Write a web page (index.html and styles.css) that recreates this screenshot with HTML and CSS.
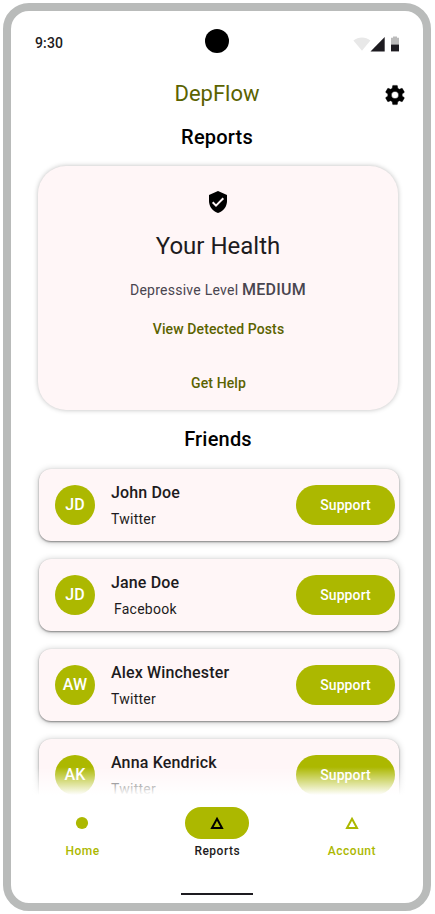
FILE: index.html
```html
<!DOCTYPE html>
<html lang="en">
<head>
<meta charset="utf-8">
<title>DepFlow</title>
<link rel="stylesheet" href="styles.css">
</head>
<body>
<div class="phone">
  <header class="status">
    <span class="time">9:30</span>
    <span class="camera"></span>
    <svg class="indicators" width="48" height="17" viewBox="0 0 48 17">
      <path d="M.4 4.600C5.500.4 12.500.4 17.400 4.600L9 14.700z" fill="#e8e8e8"/>
      <path d="M17.500 15.400 31.700.900V15.400z" fill="#1d1b20"/>
      <path d="M40 .500h4v1.300h2V8.500h-8V1.800h2z" fill="#bbb"/>
      <path d="M38 8.500h8v6.900h-8z" fill="#1d1b20"/>
    </svg>
  </header>
  <div class="appbar">
    <h1>DepFlow</h1>
    <svg class="gear" width="24" height="24" viewBox="0 0 24 24"><path d="M19.140 12.940c.04-.3.06-.61.06-.94 0-.32-.02-.64-.07-.94l2.030-1.580c.18-.14.23-.41.12-.61l-1.920-3.320c-.12-.22-.37-.29-.59-.22l-2.390.96c-.5-.38-1.030-.7-1.620-.94l-.36-2.540c-.04-.24-.24-.41-.48-.41h-3.840c-.24 0-.43.17-.47.41l-.36 2.540c-.59.24-1.130.57-1.620.94l-2.390-.96c-.22-.08-.47 0-.59.22L2.740 8.870c-.12.21-.08.47.12.61l2.030 1.580c-.05.3-.09.63-.09.94s.02.64.07.94l-2.030 1.580c-.18.14-.23.41-.12.61l1.920 3.320c.12.22.37.29.59.22l2.390-.96c.5.38 1.030.7 1.620.94l.36 2.540c.05.24.24.41.48.41h3.840c.24 0 .44-.17.47-.41l.36-2.540c.59-.24 1.130-.56 1.620-.94l2.390.96c.22.08.47 0 .59-.22l1.920-3.320c.12-.22.07-.47-.12-.61zM12 15.600A3.600 3.600 0 1 1 12 8.400a3.600 3.600 0 0 1 0 7.200z" stroke="#000" stroke-width=".4"/></svg>
  </div>
  <h2 class="reports-title">Reports</h2>
  <section class="health">
    <svg width="24" height="24" viewBox="0 0 24 24"><path d="M12 1 3 5v6c0 5.550 3.840 10.740 9 12 5.160-1.260 9-6.450 9-12V5z"/><path d="m6.700 12.300 3.300 3.300L17.300 8.300" fill="none" stroke="#fff6f7" stroke-width="2"/></svg>
    <h3>Your Health</h3>
    <p class="level">Depressive Level <b>MEDIUM</b></p>
    <a class="posts">View Detected Posts</a>
    <a class="help">Get Help</a>
  </section>
  <h2 class="friends-title">Friends</h2>
  <section class="friends">
    <article class="friend"><span class="avatar">JD</span><div class="who"><h4>John Doe</h4><p>Twitter</p></div><button>Support</button></article>
    <article class="friend"><span class="avatar">JD</span><div class="who"><h4>Jane Doe</h4><p class="indent">Facebook</p></div><button>Support</button></article>
    <article class="friend"><span class="avatar">AW</span><div class="who"><h4>Alex Winchester</h4><p>Twitter</p></div><button>Support</button></article>
    <article class="friend"><span class="avatar">AK</span><div class="who"><h4>Anna Kendrick</h4><p>Twitter</p></div><button>Support</button></article>
  </section>
  <nav>
    <a><span class="pill"><svg width="24" height="24" viewBox="0 0 24 24"><circle cx="12" cy="12" r="6.100" fill="currentColor"/></svg></span><span>Home</span></a>
    <a class="active"><span class="pill"><svg width="24" height="24" viewBox="0 0 24 24"><path d="m12 7.800 5 9.200H7z" fill="none" stroke="#000" stroke-width="2"/></svg></span><span>Reports</span></a>
    <a><span class="pill"><svg width="24" height="24" viewBox="0 0 24 24"><path d="m12 7.800 5 9.200H7z" fill="none" stroke="currentColor" stroke-width="2"/></svg></span><span>Account</span></a>
  </nav>
  <div class="gesture"></div>
</div>
</body>
</html>
```
FILE: styles.css
```css
* { box-sizing: border-box; margin: 0; }
body { background: #fff; font-family: Roboto, sans-serif; color: #1d1b20; overflow: hidden; }
.phone {
  width: 428px; height: 908px; margin: 3px;
  border: 8px solid #b9bbba; border-radius: 26px;
  display: flex; flex-direction: column; background: #fff;
}
.status {
  height: 52px; flex: none; padding: 18px 22px 0 24px;
  display: grid; grid-template-columns: 170px 24px 1fr; align-items: start;
}
.time { font-size: 14px; line-height: 28px; font-weight: 500; letter-spacing: .14px; }
.camera { width: 24px; height: 24px; border-radius: 50%; background: #000; }
.indicators { justify-self: end; margin-top: 7px; }
.appbar { height: 60px; flex: none; display: grid; grid-template-columns: 48px 1fr 48px; align-items: center; padding: 2px 4px 0; }
h1 { grid-column: 2; text-align: center; font-size: 22px; line-height: 28px; font-weight: 400; color: #5b6300; }
.gear { margin-left: 12px; margin-top: 2px; }
h2 { font-size: 20px; line-height: 28px; font-weight: 500; color: #000; text-align: center; flex: none; letter-spacing: .2px; }
.health {
  flex: none; width: 360px; height: 244px; margin: 15px 0 0 27px; padding-top: 24px;
  border-radius: 28px; background: #fff6f7;
  box-shadow: 0 0 5px rgba(0,0,0,.26);
  display: flex; flex-direction: column; align-items: center;
}
.health svg { flex: none; }
h3 { font-size: 24px; line-height: 32px; font-weight: 400; margin-top: 16px; }
.level { margin-top: 16px; font-size: 14px; line-height: 24px; letter-spacing: .25px; color: #49454f; }
.level b { font-size: 16px; font-weight: 500; }
.health a { font-size: 14px; line-height: 20px; font-weight: 500; letter-spacing: .1px; color: #5b6300; padding-left: 1px; }
.posts { margin-top: 17px; }
.help { margin-top: 34px; }
.friends-title { margin-top: 15px; padding-left: 2px; }
.friends {
  position: relative; height: 342px; flex: none; padding: 16px 13px 0 28px; overflow: hidden;
  display: flex; flex-direction: column; gap: 18px;
}
.friends::after {
  content: ""; position: absolute; left: 0; right: 0; bottom: 0; height: 28px;
  background: linear-gradient(rgba(255,255,255,0), #fff);
}
.friend {
  width: 360px; height: 72px; flex: none; border-radius: 12px; background: #fff6f7;
  box-shadow: 0 1px 2px rgba(0,0,0,.42), 0 1px 6px 1px rgba(0,0,0,.18);
  display: flex; align-items: center; padding: 0 4px 0 16px;
}
.avatar {
  width: 40px; height: 40px; border-radius: 50%; background: #acb800; color: #fff;
  font-size: 16px; font-weight: 500; line-height: 40px; text-align: center; letter-spacing: .15px;
}
.who { flex: 1; margin-left: 16px; }
h4 { font-size: 16px; line-height: 24px; font-weight: 500; letter-spacing: .15px; }
.who p { font-size: 14px; line-height: 20px; margin-top: 4px; letter-spacing: .25px; }
.who .indent { padding-left: 3px; }
button {
  width: 99px; height: 40px; border: 0; border-radius: 20px; background: #acb800; color: #fff;
  font: 500 14px/20px Roboto, sans-serif; letter-spacing: .1px;
}
nav { height: 80px; flex: none; display: flex; gap: 8px; padding: 12px 8px 0; }
nav a { flex: 1; display: flex; flex-direction: column; align-items: center; gap: 4px; color: #acb800; font-size: 12px; line-height: 16px; font-weight: 500; letter-spacing: .5px; }
nav a > span:last-child { padding-left: .5px; }
.pill { width: 64px; height: 32px; border-radius: 16px; display: flex; align-items: center; justify-content: center; }
.active { color: #1d1b20; }
.active .pill { background: #acb800; }
.gesture { width: 72px; height: 2px; flex: none; margin: 18px auto 0; background: #1d1b20; }
```
